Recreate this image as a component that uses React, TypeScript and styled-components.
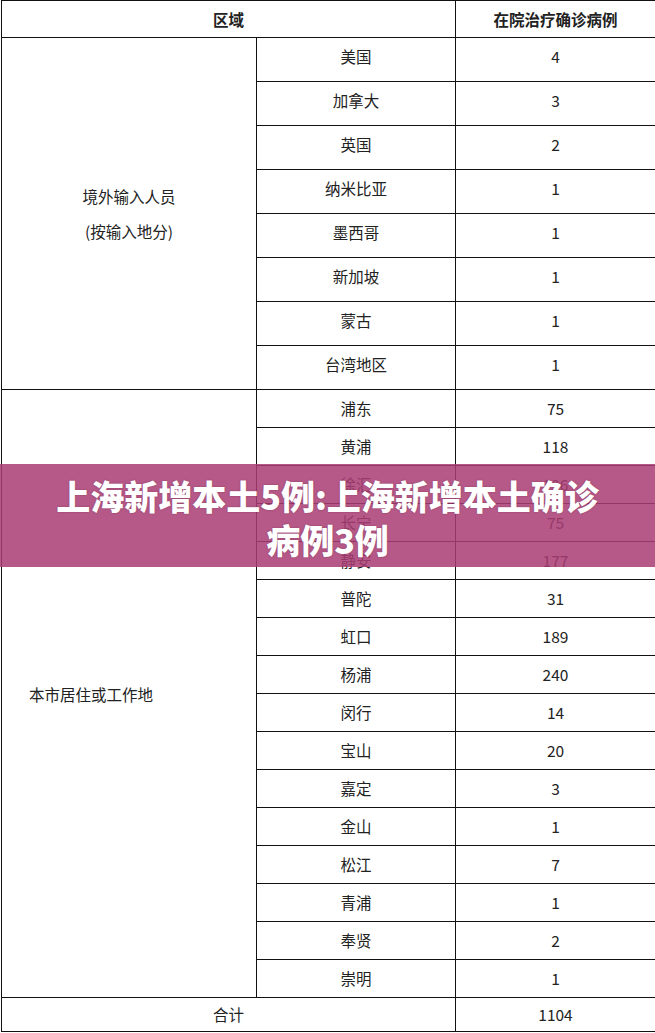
import styled, { createGlobalStyle } from "styled-components"

const GlobalStyle = createGlobalStyle`
  html, body {
    margin: 0;
    padding: 0;
    background: #ffffff;
  }
  body {
    font-family: "Noto Sans CJK SC", "Noto Sans", sans-serif;
    color: #222;
    overflow: hidden;
  }`

const Page = styled.div`
  position: relative;
  width: 655px;
  height: 1033px;
  overflow: hidden;
  padding-left: 1px;
  box-sizing: border-box;`

const Table = styled.table`
  width: 654px;
  table-layout: fixed;
  border-collapse: collapse;
  font-size: 15.5px;`

const HeadCell = styled.th`
  border: 1px solid #111;
  height: 36px;
  padding: 0;
  font-weight: 700;
  font-size: 15.5px;
  text-align: center;
  vertical-align: middle;`

const Cell = styled.td<{ $h: number; $lift?: number }>`
  border: 1px solid #111;
  height: ${p => p.$h - 1 - (p.$lift ?? 0)}px;
  padding: 0 0 ${p => p.$lift ?? 0}px;
  text-align: center;
  vertical-align: middle;
  line-height: 1;`

const GroupCell = styled.td<{ $left?: boolean }>`
  border: 1px solid #111;
  padding: ${p => p.$left ? "0 0 0 27px" : "0"};
  text-align: ${p => p.$left ? "left" : "center"};
  vertical-align: middle;`

const GroupLines = styled.div`
  display: flex;
  flex-direction: column;
  align-items: center;
  gap: 16px;
  line-height: 19px;`

const Banner = styled.div`
  position: absolute;
  left: 0;
  right: 0;
  top: 464px;
  height: 103px;
  background: rgba(170, 62, 116, 0.86);
  display: flex;
  align-items: center;
  justify-content: center;
  padding-top: 4px;
  box-sizing: border-box;`

const BannerTitle = styled.h1`
  margin: 0;
  max-width: 560px;
  color: #ffffff;
  font-family: "Noto Sans CJK SC", "Noto Sans", sans-serif;
  font-weight: 900;
  font-size: 34px;
  line-height: 44px;
  text-align: center;
  text-shadow: 0 0 2px rgba(60, 0, 30, 0.35);`

const abroad: [string, string][] = [
  ["美国", "4"],
  ["加拿大", "3"],
  ["英国", "2"],
  ["纳米比亚", "1"],
  ["墨西哥", "1"],
  ["新加坡", "1"],
  ["蒙古", "1"],
  ["台湾地区", "1"],
]

const local: [string, string][] = [
  ["浦东", "75"],
  ["黄浦", "118"],
  ["徐汇", "136"],
  ["长宁", "75"],
  ["静安", "177"],
  ["普陀", "31"],
  ["虹口", "189"],
  ["杨浦", "240"],
  ["闵行", "14"],
  ["宝山", "20"],
  ["嘉定", "3"],
  ["金山", "1"],
  ["松江", "7"],
  ["青浦", "1"],
  ["奉贤", "2"],
  ["崇明", "1"],
]

export default function App() {
  return (
    <Page>
      <GlobalStyle />
      <Table>
        <colgroup>
          <col style={{ width: 255 }} />
          <col style={{ width: 199 }} />
          <col style={{ width: 200 }} />
        </colgroup>
        <thead>
          <tr>
            <HeadCell colSpan={2}>区域</HeadCell>
            <HeadCell>在院治疗确诊病例</HeadCell>
          </tr>
        </thead>
        <tbody>
          {abroad.map(([name, n], i) => (
            <tr key={name}>
              {i === 0 && (
                <GroupCell rowSpan={abroad.length}>
                  <GroupLines>
                    <span>境外输入人员</span>
                    <span>(按输入地分)</span>
                  </GroupLines>
                </GroupCell>
              )}
              <Cell $h={44} $lift={5}>{name}</Cell>
              <Cell $h={44} $lift={5}>{n}</Cell>
            </tr>
          ))}
          {local.map(([name, n], i) => (
            <tr key={name}>
              {i === 0 && (
                <GroupCell $left rowSpan={local.length}>本市居住或工作地</GroupCell>
              )}
              <Cell $h={38}>{name}</Cell>
              <Cell $h={38}>{n}</Cell>
            </tr>
          ))}
          <tr>
            <Cell $h={34} colSpan={2}>合计</Cell>
            <Cell $h={34}>1104</Cell>
          </tr>
        </tbody>
      </Table>
      <Banner>
        <BannerTitle>上海新增本土5例:上海新增本土确诊病例3例</BannerTitle>
      </Banner>
    </Page>
  )
}
